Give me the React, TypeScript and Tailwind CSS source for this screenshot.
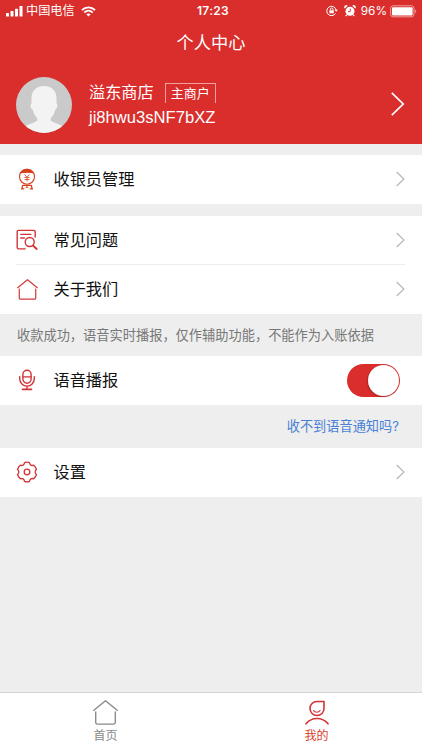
import { useState } from "react";
import type { ReactNode } from "react";

function Chevron({ large }: { large?: boolean }) {
  return large ? (
    <svg width="16" height="26" viewBox="0 0 16 26" fill="none" stroke="#fff" strokeWidth="1.7" className="-mr-px mb-px shrink-0">
      <path d="M1.8 1.8 13.2 13 1.8 24.2" />
    </svg>
  ) : (
    <svg width="10" height="16" viewBox="0 0 10 16" fill="none" stroke="#b4b4b4" strokeWidth="1.1" className="mb-px shrink-0">
      <path d="M1.7 1 8.9 8 1.7 15" />
    </svg>
  );
}

function CashierIcon() {
  return (
    <svg width="20" height="22" viewBox="0 0 20 22" fill="none" stroke="#d8401f" strokeWidth="1.1">
      <circle cx="10" cy="8.7" r="7.5" />
      <path d="M3.6 4.8C5 2.500 7.200 1.200 10 1.200s5 1.300 6.400 3.600C12.500 4 7.500 4 3.600 4.800Z" fill="#d8401f" />
      <path d="m7.500 6.300 2.500 3 2.500-3M10 9.300v4.200M7.500 9.500h5M7.500 11.500h5" strokeWidth=".8" />
      <path d="M5.300 17.300h9.400M5.600 17.600l-.6 3M14.400 17.600l.6 3M4 20.800h3.300M12.700 20.800H16" strokeWidth="1.3" />
      <path d="m10 18-1.800 1.800h3.600Z" fill="#d8401f" stroke="none" />
    </svg>
  );
}

function FaqIcon() {
  return (
    <svg width="22" height="22" viewBox="0 0 22 22" fill="none" stroke="#d43336" strokeWidth="1.4" strokeLinecap="round">
      <path d="M19.2 8V2.700a1.300 1.300 0 0 0-1.300-1.300H2.500a1.300 1.300 0 0 0-1.300 1.300v15.900a1.300 1.300 0 0 0 1.300 1.300h6.700" />
      <path d="M4.800 5.400h10M4.800 9h3.600" />
      <circle cx="13.700" cy="13" r="4.500" />
      <path d="m17 16.500 3.700 3.500" strokeWidth="1.800" />
    </svg>
  );
}

function HouseIcon({ className }: { className: string }) {
  return (
    <svg viewBox="0 0 24 24" fill="none" stroke="currentColor" strokeLinecap="round" strokeLinejoin="round" className={className}>
      <path d="M.8 9.900 12 .8l11.200 9.100" />
      <path d="M2.600 11.500v10.200c0 .9.500 1.400 1.300 1.400h16.200c.8 0 1.300-.5 1.300-1.400V11.500" />
    </svg>
  );
}

function MicIcon() {
  return (
    <svg width="18" height="22" viewBox="0 0 18 22" fill="none" stroke="#d43336" strokeWidth="1.4" strokeLinecap="round">
      <rect x="4.900" y="1.200" width="8.200" height="13" rx="4.100" />
      <path d="M5 7.900h8M1.700 7.600v2.200a7.300 7.300 0 0 0 14.600 0V7.600M9 17.200v3" />
      <path d="M4.500 20.400h9" strokeWidth="1.600" />
    </svg>
  );
}

function GearIcon() {
  return (
    <svg width="22" height="22" viewBox="0 0 22 22" fill="none" stroke="#d43336" strokeWidth="1.300" strokeLinejoin="round">
      <path d="M8.500 1.700Q11 .7 13.500 1.700C13.800 4 15.400 5 17.700 4.200Q19.800 5.900 20.400 8.500C18.700 10 18.700 12 20.400 13.500Q19.800 16.100 17.700 17.800C15.400 17 13.800 18 13.500 20.300Q11 21.300 8.500 20.300C8.200 18 6.600 17 4.300 17.800Q2.200 16.100 1.600 13.500C3.300 12 3.300 10 1.600 8.500Q2.200 5.900 4.300 4.200C6.600 5 8.200 4 8.500 1.700Z" />
      <circle cx="11" cy="11" r="2.800" />
    </svg>
  );
}

function ProfileIcon() {
  return (
    <svg width="24" height="26" viewBox="0 0 24 26" fill="none" stroke="#d43336" strokeWidth="1.600" strokeLinecap="round" strokeLinejoin="round">
      <path d="M19 1.500v7a7 7 0 1 1-7-7Z" />
      <path d="M8.600 10.500c1.200 2.300 5.100 2.300 6.500 0" strokeWidth="1.100" />
      <path d="M1 23.800c5.800-7 16.200-7 22 0" />
    </svg>
  );
}

function StatusBar() {
  return (
    <div className="grid h-[22px] grid-cols-3 items-center px-[6px] text-[12px] leading-[22px]">
      <div className="flex items-center">
        <svg width="17" height="11" viewBox="0 0 17 11" fill="#fff">
          <rect x="0" y="7" width="3" height="3.500" rx=".6" />
          <rect x="4.500" y="5" width="3" height="5.500" rx=".6" />
          <rect x="9" y="2.800" width="3" height="7.700" rx=".6" />
          <rect x="13.500" y="0" width="3" height="10.500" rx=".6" />
        </svg>
        <span className="ml-[3px] text-[12.200px]">中国电信</span>
        <svg width="15" height="11" viewBox="0 0 15 11" fill="none" stroke="#fff" strokeWidth="1.900" className="ml-[6px]">
          <path d="M.9 4.100c3.800-3.700 9.400-3.700 13.200 0M3.300 6.600c2.500-2.400 5.900-2.400 8.400 0" />
          <path d="m7.500 10.600-2.200-2.300c1.300-1.200 3.100-1.200 4.400 0Z" fill="#fff" stroke="none" />
        </svg>
      </div>
      <div className="pl-[4px] text-center font-semibold tracking-[.3px]">17:23</div>
      <div className="flex items-center justify-end">
        <svg width="12" height="12" viewBox="0 0 12 12" fill="none" stroke="#fff" strokeWidth="1">
          <path d="M9.500 8.400a4.700 4.700 0 1 1 .6-3.300" />
          <path d="m8.500 4.800 1.700 2 1.700-2Z" fill="#fff" stroke="none" />
          <rect x="3.400" y="5.300" width="4.400" height="3" fill="#fff" stroke="none" />
          <path d="M4.300 5.500V4.300a1.300 1.300 0 0 1 2.600 0v1.200" />
        </svg>
        <svg width="12" height="12" viewBox="0 0 12 12" fill="#fff" className="ml-[6px]">
          <circle cx="6" cy="6.300" r="4.500" />
          <path d="M.8 3.600A2 2 0 0 1 3.700.8ZM11.200 3.600A2 2 0 0 0 8.300.8ZM2.400 9.200l1 .9-1.300 1.300-.8-.7ZM9.600 9.200l-1 .9 1.300 1.300.8-.7Z" />
          <path d="M6.300 3.600v3H4" fill="none" stroke="#d92e2c" strokeWidth=".9" />
        </svg>
        <span className="ml-[5px] text-[11.800px]">96%</span>
        <svg width="27" height="13" viewBox="0 0 27 13" fill="none" className="-mr-px ml-[3px]">
          <rect x=".6" y=".8" width="23.400" height="11" rx="2.500" stroke="#f0a3a2" strokeWidth="1" />
          <rect x="2" y="2.200" width="20.600" height="8.200" rx="1" fill="#fff" />
          <path d="M25.200 4.600c1.400.5 1.400 3 0 3.500Z" fill="#f0a3a2" />
        </svg>
      </div>
    </div>
  );
}

function Avatar() {
  return (
    <div className="size-[56px] shrink-0 overflow-hidden rounded-full bg-[#cacaca]">
      <svg viewBox="0 0 56 56" fill="#f3f3f3">
        <path d="M28 9c-8 0-12.500 5-12.500 12v5.500c-1.500.3-1 5.500 1.200 6.300 1 4 2.500 6.500 4.500 8.200v2.500c-1.500 2.500-9.200 3-14.200 7.200V56h42v-5.300c-5-4.200-12.700-4.700-14.200-7.200V41c2-1.700 3.500-4.200 4.500-8.200 2.200-.8 2.700-6 1.200-6.300V21C40.500 14 36 9 28 9Z" />
      </svg>
    </div>
  );
}

function Row({ icon, label, children }: { icon: ReactNode; label: string; children?: ReactNode }) {
  return (
    <div className="flex h-[49px] items-center pr-[17px] pl-4">
      <div className="mb-px flex w-[22px] shrink-0 justify-center">{icon}</div>
      <span className="ml-[15.500px] flex-1 text-[16.200px] text-[#111]">{label}</span>
      {children ?? <Chevron />}
    </div>
  );
}

export default function App() {
  const [voice, setVoice] = useState(true);

  return (
    <div className="flex h-[750px] w-[422px] flex-col overflow-hidden bg-[#eee] font-['Inter','Noto_Sans_CJK_SC',sans-serif]">
      <header className="h-[144px] shrink-0 bg-[#d92e2c] text-white">
        <StatusBar />
        <h1 className="h-[42px] text-center text-[17.200px] leading-[42px]">个人中心</h1>
        <div className="flex h-[81px] items-center pr-[17px] pl-4">
          <Avatar />
          <div className="mt-px ml-[17px] flex-1">
            <div className="flex items-center">
              <span className="text-[16.200px] leading-[25px]">溢东商店</span>
              <span className="ml-[11px] h-[20px] w-[51px] border border-b-0 border-[#f0a09f] text-center text-[13px] leading-[19px]">主商户</span>
            </div>
            <div className="font-['Liberation_Sans',sans-serif] text-[16.600px] leading-[25px]">ji8hwu3sNF7bXZ</div>
          </div>
          <Chevron large />
        </div>
      </header>

      <section className="mt-[11px] bg-white">
        <Row icon={<CashierIcon />} label="收银员管理" />
      </section>

      <section className="mt-[12px] bg-white">
        <Row icon={<FaqIcon />} label="常见问题" />
        <div className="-mt-px mr-[17px] ml-4 h-px bg-[#ececec]" />
        <Row icon={<HouseIcon className="size-[21px] text-[#d43c3e] stroke-[1.4]" />} label="关于我们" />
      </section>
      <p className="h-[42px] pl-[17px] text-[13.230px] leading-[42px] whitespace-nowrap text-[#777]">
        收款成功，语音实时播报，仅作辅助功能，不能作为入账依据
      </p>

      <section className="bg-white">
        <Row icon={<MicIcon />} label="语音播报">
          <button
            role="switch"
            aria-checked={voice}
            aria-label="语音播报"
            onClick={() => setVoice(!voice)}
            className={`mr-[5px] flex h-[33px] w-[53px] rounded-full p-px ${voice ? "justify-end bg-[#d92e2c]" : "justify-start bg-[#ccc]"}`}
          >
            <span className="size-[31px] rounded-full bg-white shadow-[-1px_1px_2px_#0003]" />
          </button>
        </Row>
      </section>
      <div className="h-[43px] pr-[23px] text-right text-[13.200px] leading-[42px] text-[#4a7fd6]">收不到语音通知吗?</div>

      <section className="bg-white">
        <Row icon={<GearIcon />} label="设置" />
      </section>

      <nav className="mt-auto grid h-[58px] grid-cols-2 border-t border-[#d6d6d6] bg-white text-[12px] leading-[16px]">
        <div className="flex flex-col items-center pt-[7px] text-[#888]">
          <HouseIcon className="size-[25px] stroke-[1.3]" />
          <span className="mt-[3px]">首页</span>
        </div>
        <div className="flex flex-col items-center pt-[7px] text-[#d8401f]">
          <ProfileIcon />
          <span className="mt-[2px]">我的</span>
        </div>
      </nav>
    </div>
  );
}
